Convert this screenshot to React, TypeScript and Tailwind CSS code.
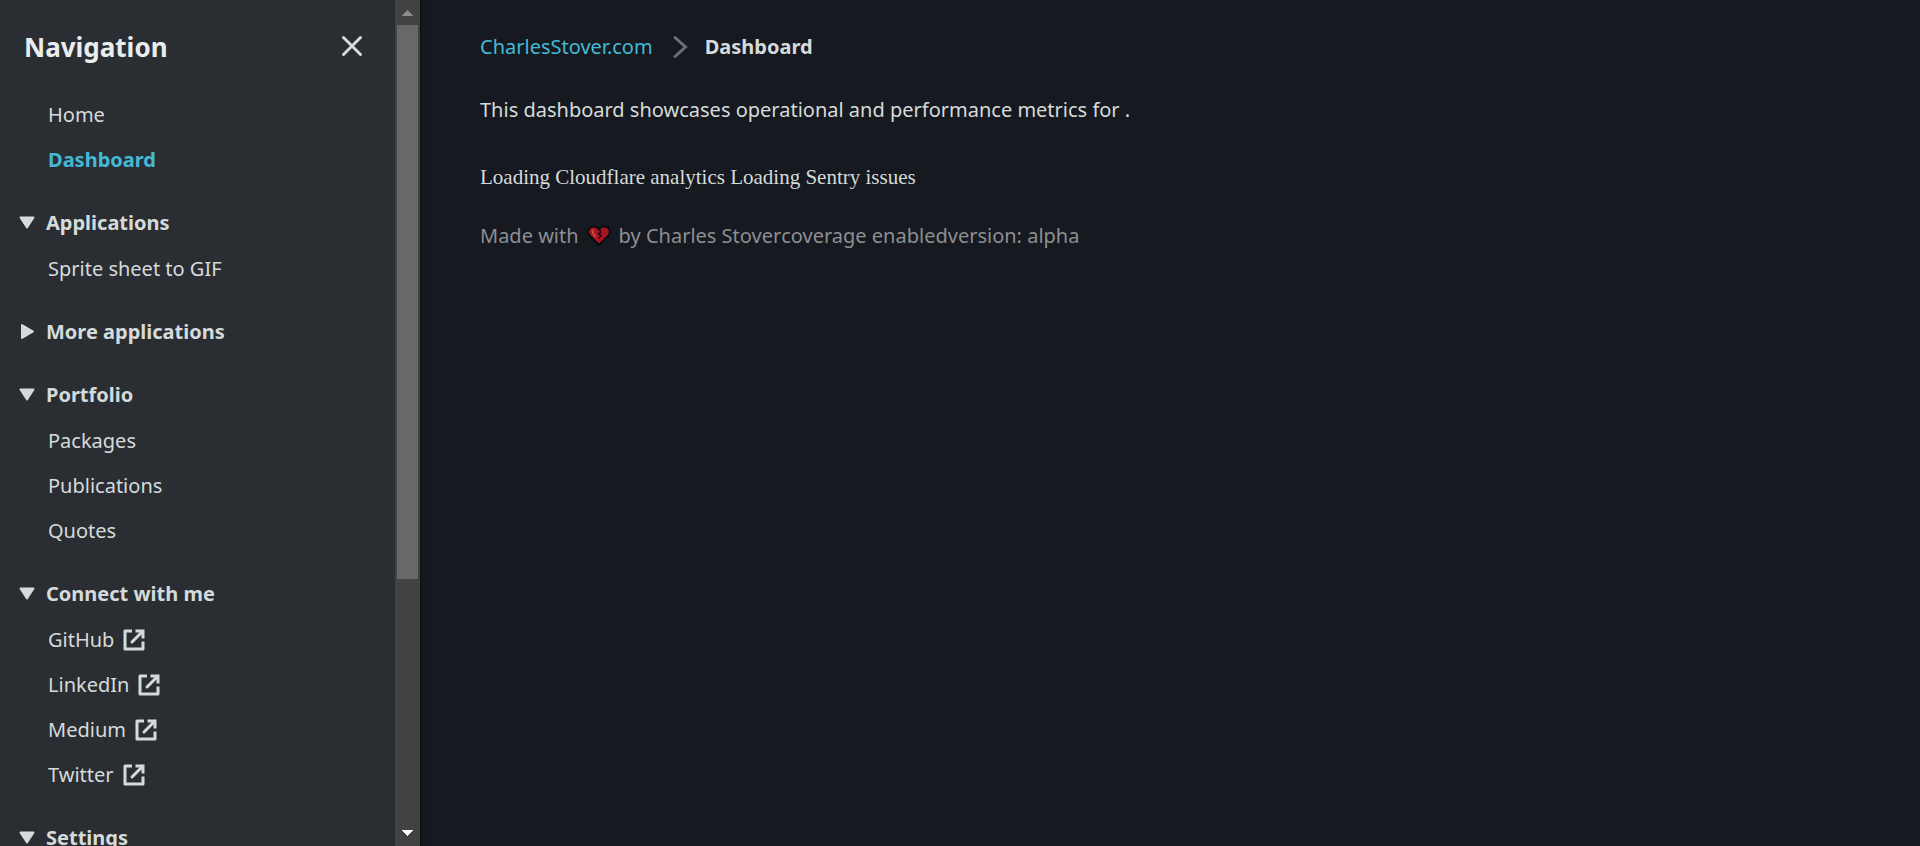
import type { ReactNode } from "react";

function ExternalIcon() {
  return (
    <svg viewBox="0 0 24 24" className="size-6 shrink-0" fill="none" stroke="currentColor" strokeWidth="3" aria-hidden="true">
      <path d="M10 3H3v18h18v-7.500" strokeLinejoin="round" />
      <path d="M10 14L20 4" strokeLinecap="round" />
      <path d="M13.500 3H21v7.500" />
    </svg>
  );
}

function NavLink({ children, active, external }: { children: ReactNode; active?: boolean; external?: boolean }) {
  return (
    <li>
      <a
        href="#"
        aria-current={active ? "page" : undefined}
        className={active ? "flex items-center gap-2 font-bold text-[#44b9d6]" : "flex items-center gap-2"}
      >
        {children}
        {external && <ExternalIcon />}
      </a>
    </li>
  );
}

function Section({ title, collapsed, children }: { title: string; collapsed?: boolean; children?: ReactNode }) {
  return (
    <section className="flex flex-col gap-[13px]">
      <h3 className="font-bold">
        <button type="button" aria-expanded={!collapsed} className="flex items-center gap-[7px]">
          <svg viewBox="0 0 24 24" className="size-6" fill="currentColor" stroke="currentColor" strokeWidth="2" strokeLinejoin="round" aria-hidden="true">
            {collapsed ? <path d="M7 5v13L18 11.500z" /> : <path d="M5.500 6.500h13L12 16.500z" />}
          </svg>
          {title}
        </button>
      </h3>
      {children && <ul className="flex flex-col gap-3 pl-[33px]">{children}</ul>}
    </section>
  );
}

function ScrollBar() {
  return (
    <div className="flex w-[25px] shrink-0 flex-col items-center bg-[#424242]" aria-hidden="true">
      <svg viewBox="0 0 25 25" className="size-[25px] shrink-0" fill="#8a8a8a" shapeRendering="crispEdges">
        <path d="M7 16L12.500 10L18 16z" />
      </svg>
      <div className="w-[21px] grow-[696] bg-[#686868]" />
      <div className="grow-[304]" />
      <svg viewBox="0 0 25 25" className="size-[25px] shrink-0" fill="#fff" shapeRendering="crispEdges">
        <path d="M7 9h11L12.500 15z" />
      </svg>
    </div>
  );
}

function BrokenHeart() {
  return (
    <svg viewBox="0 0 24 24" role="img" aria-label="broken heart" className="mx-2 size-6">
      <path
        d="M12 21L2.500 11.500C-0.500 7.500 2 2.500 6.500 2.500C9 2.500 11 3.500 12 5.500C13 3.500 15 2.500 17.500 2.500C22 2.500 24.500 7.500 21.500 11.500z"
        fill="#a81420"
        stroke="#0b0c0f"
        strokeWidth="2"
        strokeLinejoin="round"
      />
      <path d="M5.500 6.500c0 2 1 4 2.500 5.500" fill="none" stroke="#b8523f" strokeWidth="2" strokeLinecap="round" />
      <path d="M12 5l2 3-2.500 2 2.500 1.500-2 3" fill="none" stroke="#0b0c0f" strokeWidth="1.300" />
    </svg>
  );
}

export default function App() {
  return (
    <div className="flex h-screen bg-[#16191f] font-['Noto_Sans',sans-serif] text-[20px] leading-[33px] text-[#d5dbdb]">
      <aside className="flex w-[420px] shrink-0 bg-[#2a2e33] shadow-[1px_0_3px_rgba(0,0,0,0.5)]">
        <div className="min-w-0 flex-1 overflow-y-auto [scrollbar-width:none]">
          <header className="flex items-start justify-between pt-[31px] pr-[31px] pb-[34px] pl-6">
            <h2 className="text-[26px] font-bold text-[#eaeded]">Navigation</h2>
            <button type="button" aria-label="Close navigation" className="pt-[3px]">
              <svg viewBox="0 0 24 24" className="size-6" fill="none" stroke="currentColor" strokeWidth="3" strokeLinecap="round" aria-hidden="true">
                <path d="M3.500 3.500l17 17M20.500 3.500l-17 17" />
              </svg>
            </button>
          </header>
          <nav className="flex flex-col gap-[30px] pb-8 pl-[15px]">
            <ul className="flex flex-col gap-3 pl-[33px]">
              <NavLink>Home</NavLink>
              <NavLink active>Dashboard</NavLink>
            </ul>
            <Section title="Applications">
              <NavLink>Sprite sheet to GIF</NavLink>
            </Section>
            <Section title="More applications" collapsed />
            <Section title="Portfolio">
              <NavLink>Packages</NavLink>
              <NavLink>Publications</NavLink>
              <NavLink>Quotes</NavLink>
            </Section>
            <Section title="Connect with me">
              <NavLink external>GitHub</NavLink>
              <NavLink external>LinkedIn</NavLink>
              <NavLink external>Medium</NavLink>
              <NavLink external>Twitter</NavLink>
            </Section>
            <Section title="Settings" />
          </nav>
        </div>
        <ScrollBar />
      </aside>
      <main className="min-w-0 flex-1 px-[60px] pt-[30px]">
        <nav aria-label="Breadcrumbs" className="flex items-center">
          <a href="#" className="text-[#44b9d6]">CharlesStover.com</a>
          <svg viewBox="0 0 24 24" className="mx-3.5 size-6 text-[#687078]" fill="none" stroke="currentColor" strokeWidth="3" strokeLinecap="round" aria-hidden="true">
            <path d="M8 2.500l10.500 9.500L8 21.500" />
          </svg>
          <span className="font-bold">Dashboard</span>
        </nav>
        <p className="mt-[30px]">This dashboard showcases operational and performance metrics for .</p>
        <p className="mt-[35px] font-['Liberation_Serif',serif] text-[21px]">Loading Cloudflare analytics Loading Sentry issues</p>
        <footer className="mt-[25px] flex items-center text-[#8c8f92]">
          Made with
          <BrokenHeart />
          by Charles Stover<span>coverage enabled</span><span>version: alpha</span>
        </footer>
      </main>
    </div>
  );
}
